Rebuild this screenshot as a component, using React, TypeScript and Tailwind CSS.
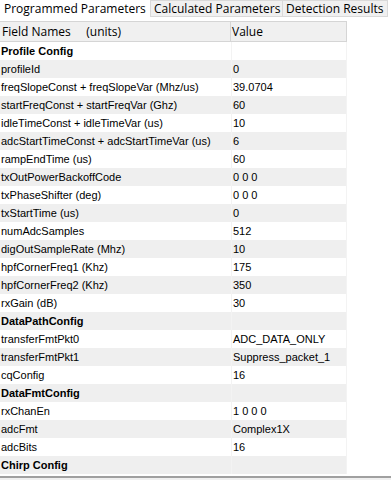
const rows: [string, string, boolean?][] = [
  ["Profile Config", "", true],
  ["profileId", "0"],
  ["freqSlopeConst + freqSlopeVar (Mhz/us)", "39.0704"],
  ["startFreqConst + startFreqVar (Ghz)", "60"],
  ["idleTimeConst + idleTimeVar (us)", "10"],
  ["adcStartTimeConst + adcStartTimeVar (us)", "6"],
  ["rampEndTime (us)", "60"],
  ["txOutPowerBackoffCode", "0 0 0"],
  ["txPhaseShifter (deg)", "0 0 0"],
  ["txStartTime (us)", "0"],
  ["numAdcSamples", "512"],
  ["digOutSampleRate (Mhz)", "10"],
  ["hpfCornerFreq1 (Khz)", "175"],
  ["hpfCornerFreq2 (Khz)", "350"],
  ["rxGain (dB)", "30"],
  ["DataPathConfig", "", true],
  ["transferFmtPkt0", "ADC_DATA_ONLY"],
  ["transferFmtPkt1", "Suppress_packet_1"],
  ["cqConfig", "16"],
  ["DataFmtConfig", "", true],
  ["rxChanEn", "1 0 0 0"],
  ["adcFmt", "Complex1X"],
  ["adcBits", "16"],
  ["Chirp Config", "", true],
];

const tabs = ["Programmed Parameters", "Calculated Parameters", "Detection Results"];

export default function App() {
  return (
    <div className="w-[391px] h-[480px] bg-white overflow-hidden flex flex-col text-black">
      {/* tab strip */}
      <div className="h-[21px] flex items-start shrink-0" style={{ fontFamily: '"Open Sans", sans-serif' }}>
        {tabs.map((t, i) =>
          i === 0 ? (
            <div key={t} className="h-[21px] w-[150px] pl-[4px] bg-white text-[12px] leading-[17px] whitespace-nowrap">
              {t}
            </div>
          ) : (
            <div
              key={t}
              className={
                i === 1
                  ? "h-[17px] w-[133px] px-[3px] bg-[#f0f0f0] border border-[#d9d9d9] text-[12px] leading-[16px] whitespace-nowrap overflow-hidden"
                  : "h-[17px] w-[105px] px-[3px] bg-[#f0f0f0] border border-l-0 border-[#d9d9d9] text-[12px] leading-[16px] whitespace-nowrap overflow-hidden"
              }
            >
              {t}
            </div>
          )
        )}
      </div>

      {/* grid */}
      <div className="flex-1 overflow-hidden">
        <div className="w-[347px]">
          <div
            className="flex h-[21px] bg-[#f0f0f0] border-t border-b border-[#d5d5d5] text-[12px] leading-[20px]"
            style={{ fontFamily: '"Open Sans", sans-serif' }}
          >
            <div className="w-[231px] pl-[2px] border-r border-[#d5d5d5] whitespace-pre">Field Names     (units)</div>
            <div className="flex-1 pl-[1px] border-r border-[#d5d5d5]">Value</div>
          </div>
          {rows.map(([name, value, bold], i) => (
            <div
              key={name}
              className={
                (i % 2 === 1 ? "bg-[#efefef] " : "bg-white ") +
                "flex h-[18px] text-[11px] leading-[19px]" +
                (bold ? " font-bold" : "")
              }
              style={{ fontFamily: '"Liberation Sans", Arial, sans-serif' }}
            >
              <div className="w-[231px] pl-[1px] whitespace-nowrap overflow-hidden">{name}</div>
              <div className="flex-1 pl-[1px] border-l border-[#f3f3f3] border-r whitespace-nowrap">{value}</div>
            </div>
          ))}
        </div>
      </div>
      <div className="h-[4px] shrink-0 border-t-2 border-[#a0a0a0] bg-[#f0f0f0]" />
    </div>
  );
}
